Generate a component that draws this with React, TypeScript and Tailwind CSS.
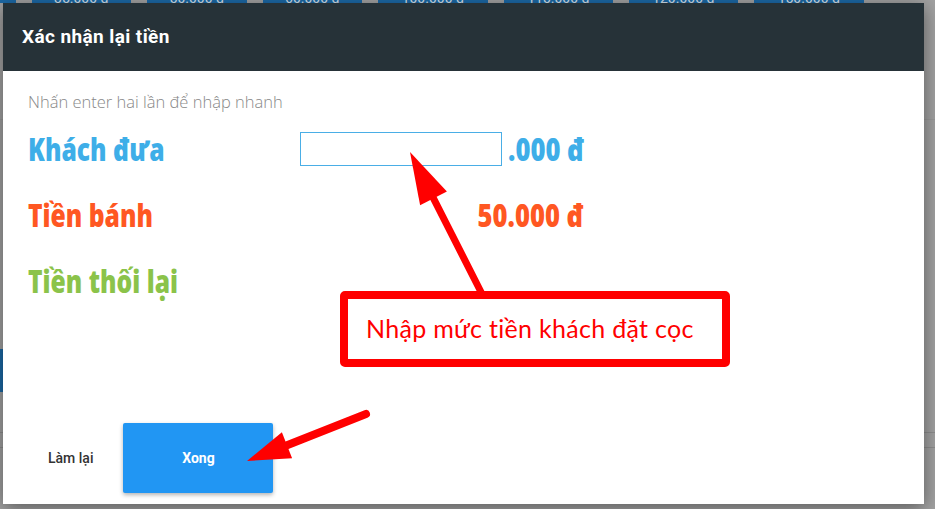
import React from "react";

const tabs = [
  { w: 16, t: "" },
  { w: 99, t: "35.000 đ" },
  { w: 100, t: "50.000 đ" },
  { w: 99, t: "60.000 đ" },
  { w: 110, t: "100.000 đ" },
  { w: 109, t: "115.000 đ" },
  { w: 109, t: "120.000 đ" },
  { w: 110, t: "150.000 đ" },
];

const bigFont = { fontFamily: '"Open Sans", sans-serif' };

function Arrows() {
  return (
    <svg className="pointer-events-none absolute left-0 top-0" width="935" height="509" viewBox="0 0 935 509">
      <line x1="481" y1="292" x2="433.5" y2="198.4" stroke="#ff0000" strokeWidth="7" strokeLinecap="round" />
      <polygon points="410,152 446.9,191.6 420.1,205.2" fill="#ff0000" />
      <line x1="366" y1="414" x2="287" y2="445.2" stroke="#ff0000" strokeWidth="8" strokeLinecap="round" />
      <polygon points="247,461 281.9,432.2 292.1,458.2" fill="#ff0000" />
    </svg>
  );
}

export default function App() {
  return (
    <div className="relative h-[509px] w-[935px] overflow-hidden bg-[#a2a2a2]" style={{ fontFamily: "Roboto, sans-serif" }}>
      {/* page behind the modal */}
      <div className="flex h-[3px] gap-[16px] overflow-hidden">
        {tabs.map((tab, i) => (
          <div
            key={i}
            className="flex h-[3px] shrink-0 items-end justify-center bg-[#1c69a6] text-[14px] leading-none text-[#d7e3ee]"
            style={{ width: tab.w }}
          >
            <span className="relative top-[2px]">{tab.t}</span>
          </div>
        ))}
      </div>
      <div className="h-[117px] border-b border-[#9a9a9a]" />
      <div className="mt-[229px] h-[43px] w-[3px] bg-[#1c69a6]" />
      <div className="mt-[40px] h-[16px] border-y border-[#8e8e8e]" />

      {/* modal */}
      <div className="absolute left-[3px] top-[3px] flex h-[501px] w-[921px] flex-col bg-white shadow-[0_4px_18px_rgba(0,0,0,0.45)]">
        <div className="flex h-[68px] items-center bg-[#263238] pl-[19px]">
          <h2 className="text-[19px] font-bold tracking-[0.4px] text-white">Xác nhận lại tiền</h2>
        </div>

        <div className="flex-1 pl-[25px] pt-[20px]">
          <p className="h-[22px] text-[16.5px] font-light leading-[22px] text-[#888]" style={{ fontFamily: '"Open Sans", sans-serif' }}>
            Nhấn enter hai lần để nhập nhanh
          </p>
          <div className="mt-[3px] flex h-[66px] w-[556px] items-center justify-between" style={bigFont}>
            <span className="inline-block origin-left scale-x-[0.77] whitespace-nowrap text-[32px] font-extrabold text-[#3eaee8]">Khách đưa</span>
            <div className="flex items-center gap-[6px]">
              <input className="h-[34px] w-[202px] border border-[#4aaee6] bg-white px-2 text-[16px] outline-none" />
              <span className="w-[76px] whitespace-nowrap">
                <span className="inline-block origin-left scale-x-[0.8] text-[32px] font-extrabold text-[#3eaee8]">.000 đ</span>
              </span>
            </div>
          </div>
          <div className="flex h-[66px] w-[556px] items-center justify-between" style={bigFont}>
            <span className="inline-block origin-left scale-x-[0.77] whitespace-nowrap text-[32px] font-extrabold text-[#ff5722]">Tiền bánh</span>
            <span className="inline-block origin-right scale-x-[0.8] whitespace-nowrap text-[32px] font-extrabold text-[#ff5722]">50.000 đ</span>
          </div>
          <div className="flex h-[66px] w-[556px] items-center" style={bigFont}>
            <span className="inline-block origin-left scale-x-[0.77] whitespace-nowrap text-[32px] font-extrabold text-[#8bc34a]">Tiền thối lại</span>
          </div>
        </div>

        <div className="flex items-center pb-[11px] pl-[29px]">
          <button className="px-4 text-[14px] font-medium text-[#333]">Làm lại</button>
          <button className="ml-[14px] h-[70px] w-[150px] rounded-[2px] bg-[#2196f3] text-[14px] font-bold text-white shadow-[0_2px_4px_rgba(0,0,0,0.3)]">
            Xong
          </button>
        </div>
      </div>

      {/* annotation */}
      <div className="absolute left-[340px] top-[291px] flex h-[76px] w-[390px] items-center rounded-[5px] border-[8px] border-[#ff0000] bg-white pl-[18px]">
        <span className="whitespace-nowrap text-[25px] tracking-[0.3px] text-[#ff0000]" style={{ fontFamily: "Lato, sans-serif" }}>
          Nhập mức tiền khách đặt cọc
        </span>
      </div>
      <Arrows />
    </div>
  );
}
